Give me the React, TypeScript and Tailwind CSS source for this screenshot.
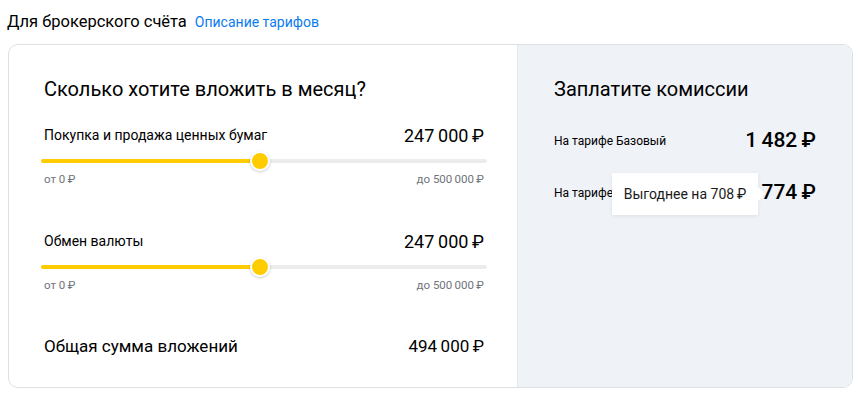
import React from 'react';

const font = { fontFamily: 'Roboto, "Noto Sans", sans-serif' };

function Slider({ label, value, percent }: { label: string; value: string; percent: number }) {
  return (
    <div>
      <div className="flex h-[24px] items-center justify-between">
        <span className="text-[14px] text-black">{label}</span>
        <span className="text-[18px] text-black">{value}</span>
      </div>
      <div className="relative mx-[-3px] mt-[6px] h-[16px]">
        <div className="absolute left-0 right-0 top-[6px] h-[4px] rounded-full bg-[#ececec]" />
        <div className="absolute left-0 top-[6px] h-[4px] rounded-full bg-[#ffcc00]" style={{ width: `${percent}%` }} />
        <div
          className="absolute top-[-2px] h-[20px] w-[20px] -translate-x-1/2 rounded-full border-2 border-white bg-[#ffcc00] shadow-[0_1px_3px_rgba(0,0,0,0.2)]"
          style={{ left: `${percent}%` }}
        />
      </div>
      <div className="mt-[4px] flex h-[14px] items-center justify-between text-[11.5px] text-[#6f747a]">
        <span>{'от 0\u2009₽'}</span>
        <span>{'до 500\u2009000\u2009₽'}</span>
      </div>
    </div>
  );
}

export default function App() {
  return (
    <div className="bg-white px-[7px] pt-[10px]" style={font}>
      <div className="flex h-[20px] items-baseline gap-[8px]">
        <span className="text-[16.5px] text-black">Для брокерского счёта</span>
        <a className="text-[14px] text-[#0a7cf0]">Описание тарифов</a>
      </div>

      <div className="ml-[1px] mt-[14px] flex h-[344px] w-[845px] overflow-hidden rounded-[10px] border border-[#dcdfe3]">
        {/* left: inputs */}
        <div className="w-[508px] pl-[35px] pr-[33px] pt-[31px]">
          <h2 className="h-[26px] text-[20px] leading-[26px] text-black">Сколько хотите вложить в месяц?</h2>
          <div className="mt-[21px]">
            <Slider label="Покупка и продажа ценных бумаг" value={'247\u2009000\u2009₽'} percent={49} />
          </div>
          <div className="mt-[42px]">
            <Slider label="Обмен валюты" value={'247\u2009000\u2009₽'} percent={49} />
          </div>
          <div className="mt-[42px] flex h-[24px] items-center justify-between">
            <span className="text-[17px] text-black">Общая сумма вложений</span>
            <span className="text-[17px] text-black">{'494\u2009000\u2009₽'}</span>
          </div>
        </div>

        {/* right: commissions */}
        <div className="flex-1 border-l border-[#e3e7ee] bg-[#eff2f7] pl-[36px] pr-[36px] pt-[31px]">
          <h2 className="h-[26px] text-[20px] leading-[26px] text-black">Заплатите комиссии</h2>
          <div className="mt-[25px] flex h-[28px] items-center justify-between">
            <span className="text-[12px] text-black">На тарифе Базовый</span>
            <span className="text-[21px] font-medium text-black">{'1\u2009482\u2009₽'}</span>
          </div>
          <div className="relative mt-[24px] flex h-[28px] items-center justify-between">
            <span className="w-[58px] overflow-hidden whitespace-nowrap text-[12px] text-black">На тарифе Инвестор</span>
            <span className="text-[21px] font-medium text-black">{'774\u2009₽'}</span>
            <div className="absolute left-[58px] top-[-6px] flex h-[42px] w-[146px] items-center justify-center bg-white text-[14px] text-[#1a1a1a] shadow-[0_1px_4px_rgba(0,0,0,0.08)]">
              {'Выгоднее на 708\u2009₽'}
              <div className="absolute right-[-5px] top-[16px] h-[10px] w-[10px] rotate-45 bg-white" />
            </div>
          </div>
        </div>
      </div>
    </div>
  );
}
